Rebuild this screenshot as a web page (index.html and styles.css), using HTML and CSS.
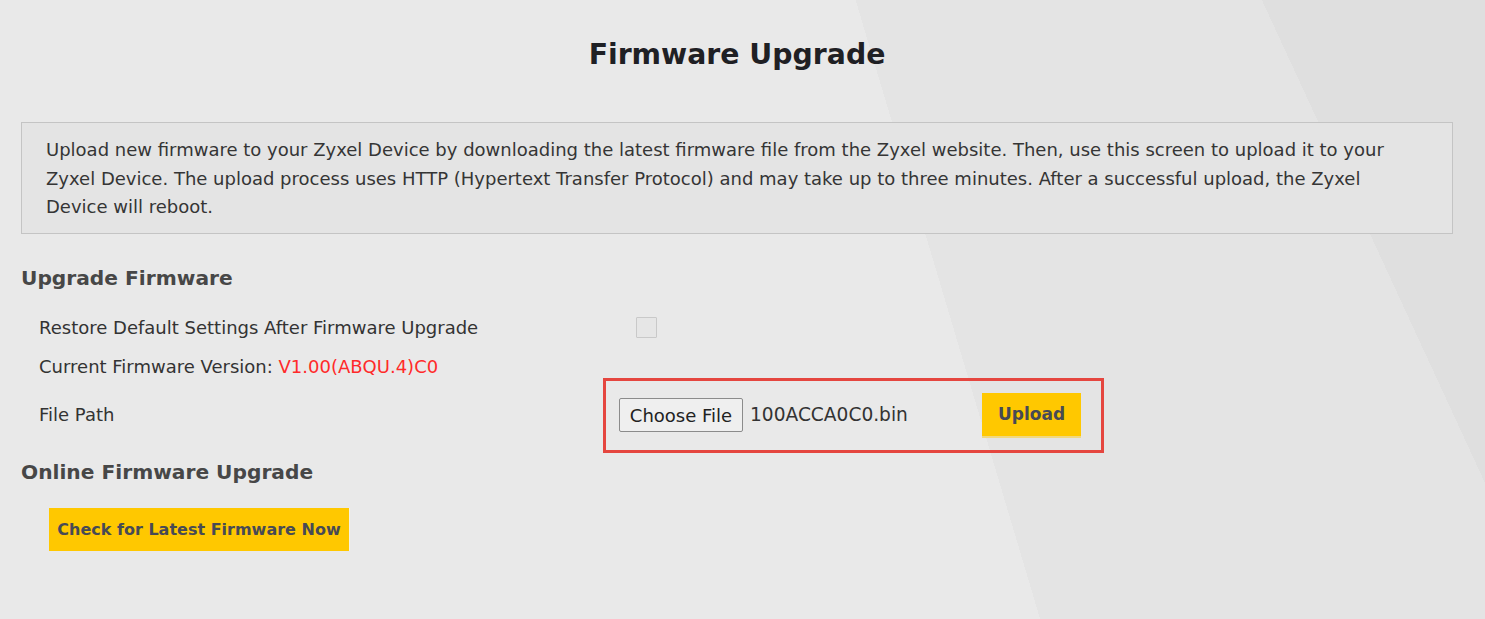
FILE: index.html
```html
<!DOCTYPE html>
<html lang="en">
<head>
<meta charset="utf-8">
<title>Firmware Upgrade</title>
<link rel="stylesheet" href="styles.css">
</head>
<body>
<main class="page">
  <h1 class="title">Firmware Upgrade</h1>
  <div class="info">
    Upload new firmware to your Zyxel Device by downloading the latest firmware file from the Zyxel website. Then, use this screen to upload it to your<br>
    Zyxel Device. The upload process uses HTTP (Hypertext Transfer Protocol) and may take up to three minutes. After a successful upload, the Zyxel<br>
    Device will reboot.
  </div>

  <h2 class="section">Upgrade Firmware</h2>
  <div class="rows">
    <div class="row row-first">
      <span class="label">Restore Default Settings After Firmware Upgrade</span>
      <span class="field"><span class="checkbox"></span></span>
    </div>
    <div class="row row-second">
      <span class="label">Current Firmware Version: <span class="version">V1.00(ABQU.4)C0</span></span>
    </div>
    <div class="row row-file">
      <span class="label">File Path</span>
      <div class="highlight">
        <button class="choose" type="button">Choose File</button>
        <span class="fname">100ACCA0C0.bin</span>
        <button class="btn-yellow btn-upload" type="button">Upload</button>
      </div>
    </div>
  </div>

  <h2 class="section section-online">Online Firmware Upgrade</h2>
  <div class="online">
    <button class="btn-yellow btn-check" type="button">Check for Latest Firmware Now</button>
  </div>
</main>
</body>
</html>
```

FILE: styles.css
```css
html {
  background: #e9e9e9;
}
body {
  margin: 0;
  min-height: 100vh;
  font-family: "DejaVu Sans", "Liberation Sans", sans-serif;
  color: #333;
  background:
    linear-gradient(65.2deg, transparent 87.4%, #dfdfdf 87.4%),
    linear-gradient(73.4deg, transparent 62.3%, #e4e4e4 62.3%),
    #e9e9e9;
}
.page {
  padding: 0 32px 0 21px;
}
.title {
  margin: 0;
  padding-top: 37px;
  height: 36px;
  line-height: 36px;
  text-align: center;
  font-size: 28.3px;
  font-weight: bold;
  color: #1f2024;
}
.info {
  margin-top: 49px;
  border: 1px solid #c4c4c4;
  background: #e4e4e4;
  padding: 13px 20px 11px 24px;
  font-size: 18px;
  line-height: 28.5px;
  color: #353535;
  white-space: nowrap;
}
.section {
  margin: 29px 0 0 0;
  font-size: 20.2px;
  line-height: 30px;
  font-weight: bold;
  color: #474747;
}
.rows {
  margin-top: 16px;
  padding-left: 18px;
}
.row {
  display: flex;
  align-items: center;
  font-size: 18px;
  line-height: 22px;
}
.row-first {
  padding: 8px 0;
}
.row-second {
  padding-top: 9px;
}
.label {
  width: 564px;
  flex: none;
}
.field {
  display: flex;
  align-items: center;
}
.checkbox {
  display: block;
  width: 19px;
  height: 19px;
  margin-left: 33px;
  border: 1px solid #c9c9c9;
  background: #e6e6e6;
  border-radius: 1px;
}
.version {
  color: #ff2a2a;
}
.highlight {
  box-sizing: border-box;
  width: 501px;
  height: 75px;
  border: 3px solid #e5463f;
  display: flex;
  align-items: center;
  padding: 0 20px 0 13px;
}
.choose {
  box-sizing: border-box;
  width: 124px;
  height: 34px;
  padding: 0;
  border: 1px solid #8b8b8b;
  border-radius: 2px;
  background: #efefef;
  font-family: inherit;
  font-size: 18px;
  color: #222;
}
.fname {
  margin-left: 7px;
  font-size: 18.6px;
  color: #333;
}
.btn-yellow {
  border: 0;
  background: #ffc800;
  font-family: inherit;
  font-weight: bold;
  color: #474a55;
  padding: 0;
}
.btn-upload {
  margin-left: auto;
  width: 99px;
  height: 45px;
  font-size: 17px;
  border-bottom: 2px solid #f0d880;
}
.section-online {
  margin-top: 4px;
}
.online {
  margin-top: 21px;
  padding-left: 28px;
}
.btn-check {
  width: 301px;
  height: 43px;
  font-size: 16px;
  border-right: 1px solid #f6f2e2;
}
```
